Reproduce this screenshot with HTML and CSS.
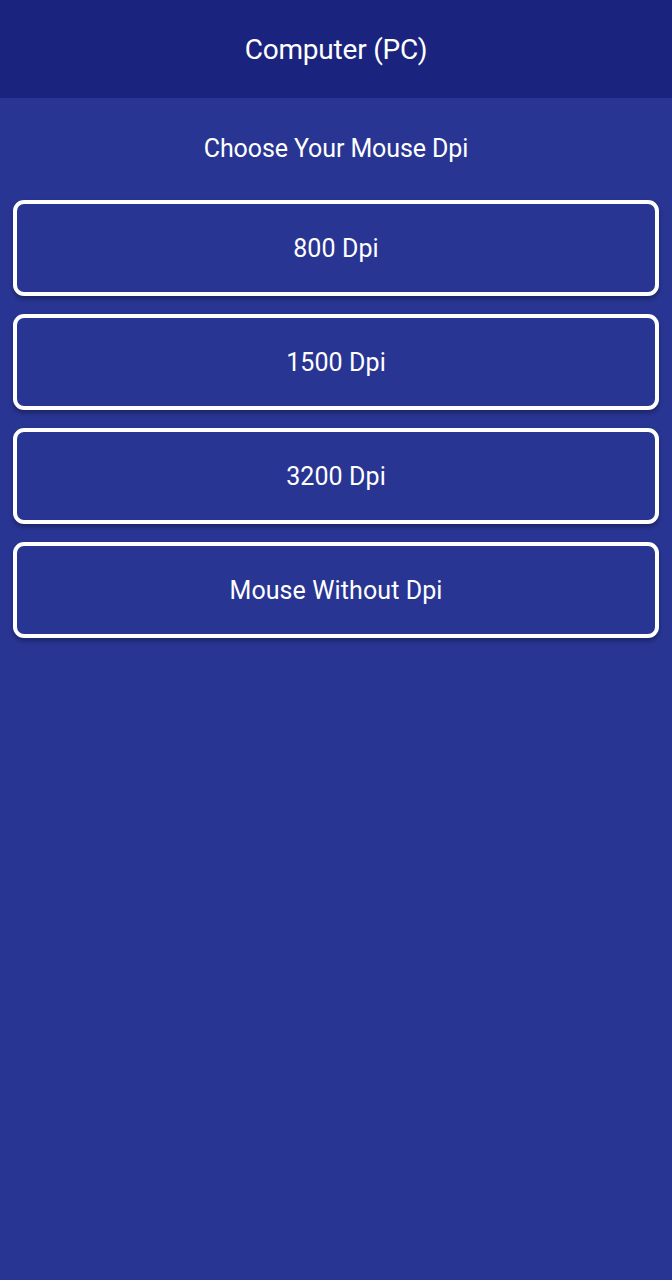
FILE: index.html
```html
<!DOCTYPE html>
<html>
<head>
<meta charset="utf-8">
<link rel="stylesheet" href="styles.css">
</head>
<body>
<header class="topbar"><h1 class="title">Computer (PC)</h1></header>
<main class="content">
  <p class="subtitle">Choose Your Mouse Dpi</p>
  <div class="options">
    <button class="option">800 Dpi</button>
    <button class="option">1500 Dpi</button>
    <button class="option">3200 Dpi</button>
    <button class="option">Mouse Without Dpi</button>
  </div>
</main>
</body>
</html>
```
FILE: styles.css
```css
html, body {
  margin: 0;
  padding: 0;
  height: 100%;
}
body {
  background: #283593;
  font-family: Roboto, "Liberation Sans", sans-serif;
  color: #ffffff;
}
.topbar {
  background: #1a237e;
  height: 98px;
  display: flex;
  align-items: center;
  justify-content: center;
}
.title {
  margin: 0;
  font-size: 28px;
  font-weight: 400;
  letter-spacing: -0.2px;
}
.content {
  padding: 0 13px;
}
.subtitle {
  margin: 0;
  height: 102px;
  display: flex;
  align-items: center;
  justify-content: center;
  font-size: 25px;
  letter-spacing: -0.1px;
  padding-bottom: 2px;
  box-sizing: border-box;
}
.options {
  display: flex;
  flex-direction: column;
  gap: 18px;
}
.option {
  height: 96px;
  box-sizing: border-box;
  border: 4px solid #ffffff;
  border-radius: 11px;
  background: #283593;
  color: #ffffff;
  font-family: inherit;
  font-size: 25px;
  letter-spacing: 0.1px;
  box-shadow: 0 3px 4px rgba(0, 0, 0, 0.3);
  width: 100%;
  padding: 0;
}
```
